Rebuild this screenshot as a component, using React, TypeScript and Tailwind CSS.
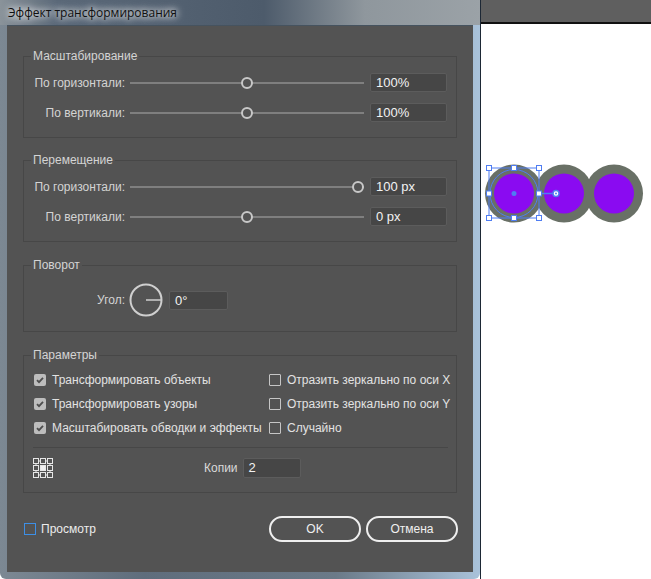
import clsx from "clsx";

const FONT = { fontFamily: '"Liberation Sans", Arial, sans-serif' };

function Field({ value, className }: { value: string; className?: string }) {
  return (
    <div
      className={clsx(
        "h-[19px] rounded-[2px] border border-[#5c5c5c] bg-[#464646] pl-[5px] text-[13px] leading-[17px] text-[#f3f3f3]",
        className
      )}
    >
      {value}
    </div>
  );
}

function SliderRow({ label, value, end }: { label: string; value: string; end?: boolean }) {
  return (
    <div className="flex h-[19px] items-center">
      <span className="w-[101px] text-right">{label}</span>
      <div className="relative ml-[5px] h-[2px] w-[234px] bg-[#7f7f7f]">
        <span
          className={clsx(
            "absolute top-1/2 h-[12px] w-[12px] -translate-y-1/2 rounded-full border-2 border-[#c8c8c8] bg-[#535353]",
            end ? "right-0" : "left-1/2 -translate-x-1/2"
          )}
        />
      </div>
      <Field value={value} className="ml-[6px] w-[77px]" />
    </div>
  );
}

function Check({ checked, label }: { checked?: boolean; label: string }) {
  return (
    <div className="flex h-[24px] items-center">
      {checked ? (
        <span className="flex h-[12px] w-[12px] items-center justify-center rounded-[2px] bg-[#bdbdbd]">
          <svg width="10" height="10" viewBox="0 0 10 10">
            <path d="M2 5.2l2 2 4-4.4" fill="none" stroke="#4d4d4d" strokeWidth="1.8" />
          </svg>
        </span>
      ) : (
        <span className="h-[12px] w-[12px] rounded-[1px] border border-[#c6c6c6]" />
      )}
      <span className="ml-[6px] text-[#e2e2e2]">{label}</span>
    </div>
  );
}

function Group({ title, className, children }: { title: string; className: string; children: React.ReactNode }) {
  return (
    <fieldset className={clsx("mx-[16px] border border-[#474747]", className)}>
      <legend className="ml-[7px] px-[2px] leading-[14px] text-[#d4d4d4]">{title}</legend>
      {children}
    </fieldset>
  );
}

// 3x3 reference point picker, centre point active
function RefPoint() {
  const cells = [];
  for (let r = 0; r < 3; r++)
    for (let c = 0; c < 3; c++)
      cells.push(
        <rect
          key={r * 3 + c}
          x={0.5 + c * 7}
          y={0.5 + r * 7}
          width="5"
          height="5"
          fill={r === 1 && c === 1 ? "#f0f0f0" : "none"}
          stroke="#e6e6e6"
          strokeWidth="1"
        />
      );
  return (
    <svg width="20" height="20" viewBox="0 0 20 20">
      <path d="M6 3h1M13 3h1M6 17h1M13 17h1M3 6v1M3 13v1M17 6v1M17 13v1" stroke="#e6e6e6" strokeWidth="1" />
      {cells}
    </svg>
  );
}

function Artboard() {
  const handles = [
    [8, 168],
    [33, 168],
    [58, 168],
    [8, 193.5],
    [58, 193.5],
    [8, 218],
    [33, 218],
    [58, 218],
  ];
  return (
    <div className="relative flex-1 border-l border-[#1d2835] bg-white">
      <div className="h-[24px] border-b-2 border-[#111] bg-[#5f5f5f]" />
      <svg className="absolute left-0 top-0" width="171" height="579">
        {[33, 83, 133].map((cx) => (
          <g key={cx}>
            <circle cx={cx} cy="193.5" r="29" fill="#697066" />
            <circle cx={cx} cy="193.5" r="20" fill="#8a0bf1" />
          </g>
        ))}
        <circle cx="33" cy="193.5" r="24" fill="none" stroke="#4f7df2" strokeWidth="1" />
        <rect x="8" y="168" width="50" height="50" fill="none" stroke="#4f7df2" strokeWidth="1" />
        <circle cx="33" cy="193.5" r="2.5" fill="#4f7df2" />
        <line x1="58" y1="193.5" x2="72" y2="193.5" stroke="#4f7df2" strokeWidth="1.5" />
        <circle cx="75" cy="193.5" r="3" fill="#fff" stroke="#4f7df2" strokeWidth="1.5" />
        <circle cx="75" cy="193.5" r="1" fill="#4f7df2" />
        {handles.map(([x, y], i) => (
          <rect key={i} x={x - 2.5} y={y - 2.5} width="5" height="5" fill="#fff" stroke="#4f7df2" strokeWidth="1" />
        ))}
      </svg>
    </div>
  );
}

export default function App() {
  return (
    <div className="flex h-[579px] w-[651px] overflow-hidden bg-white text-[12px]" style={FONT}>
      {/* dialog window */}
      <div className="flex h-full w-[480px] flex-col rounded-b-[6px] bg-[linear-gradient(90deg,#7c8893_0%,#5f6d7c_30%,#6b7a88_70%,#a9c2da_100%)]">
        <div className="flex h-[25px] items-center bg-[linear-gradient(90deg,#8a939a_0%,#5a6878_12%,#4d5b6b_55%,#8f979d_76%,#9ba2a7_100%)] pl-[8px]">
          <span
            className="text-[12px] text-[#101010] [text-shadow:0_0_6px_#fff,0_0_10px_#fff]"
            style={{ fontFamily: '"Open Sans", "Liberation Sans", sans-serif' }}
          >
            Эффект трансформирования
          </span>
        </div>

        <div className="mx-[7px] mb-[7px] flex flex-1 flex-col border-t border-[#46535f] bg-[#535353] pt-[23px] text-[#d4d4d4]">
          <Group title="Масштабирование" className="h-[89px]">
            <div className="flex flex-col gap-[11px] pt-[10px]">
              <SliderRow label="По горизонтали:" value="100%" />
              <SliderRow label="По вертикали:" value="100%" />
            </div>
          </Group>

          <Group title="Перемещение" className="mt-[15px] h-[89px]">
            <div className="flex flex-col gap-[11px] pt-[10px]">
              <SliderRow label="По горизонтали:" value="100 px" end />
              <SliderRow label="По вертикали:" value="0 px" />
            </div>
          </Group>

          <Group title="Поворот" className="mt-[16px] h-[74px]">
            <div className="flex items-center pt-[11px]">
              <span className="w-[101px] text-right">Угол:</span>
              <svg className="ml-[4px]" width="34" height="34" viewBox="0 0 34 34">
                <circle cx="17" cy="17" r="15.5" fill="none" stroke="#cfcfcf" strokeWidth="2" />
                <line x1="17" y1="17" x2="32" y2="17" stroke="#cfcfcf" strokeWidth="1.5" />
              </svg>
              <Field value="0°" className="ml-[6px] w-[59px]" />
            </div>
          </Group>

          <Group title="Параметры" className="mt-[16px] h-[145px]">
            <div className="grid grid-cols-[245px_1fr] pt-[6px]">
              <div className="pl-[10px]">
                <Check checked label="Трансформировать объекты" />
                <Check checked label="Трансформировать узоры" />
                <Check checked label="Масштабировать обводки и эффекты" />
              </div>
              <div>
                <Check label="Отразить зеркально по оси X" />
                <Check label="Отразить зеркально по оси Y" />
                <Check label="Случайно" />
              </div>
            </div>
            <div className="ml-[9px] mr-[8px] mt-[7px] h-px bg-[#474747]" />
            <div className="mt-[10px] flex h-[20px] items-center pl-[9px]">
              <RefPoint />
              <span className="ml-[151px] text-[#dadada]">Копии</span>
              <Field value="2" className="ml-[5px] h-[20px] w-[58px]" />
            </div>
          </Group>

          <div className="mt-[23px] flex h-[26px] items-center pl-[17px] pr-[15px]">
            <span className="h-[12px] w-[12px] border border-[#3d8fe6]" />
            <span className="ml-[5px] text-[#ececec]">Просмотр</span>
            <button className="ml-auto h-[26px] w-[92px] rounded-full border-2 border-[#efefef] text-[#f0f0f0]">
              OK
            </button>
            <button className="ml-[5px] h-[26px] w-[92px] rounded-full border-2 border-[#efefef] text-[#f0f0f0]">
              Отмена
            </button>
          </div>
        </div>
      </div>

      <Artboard />
    </div>
  );
}
